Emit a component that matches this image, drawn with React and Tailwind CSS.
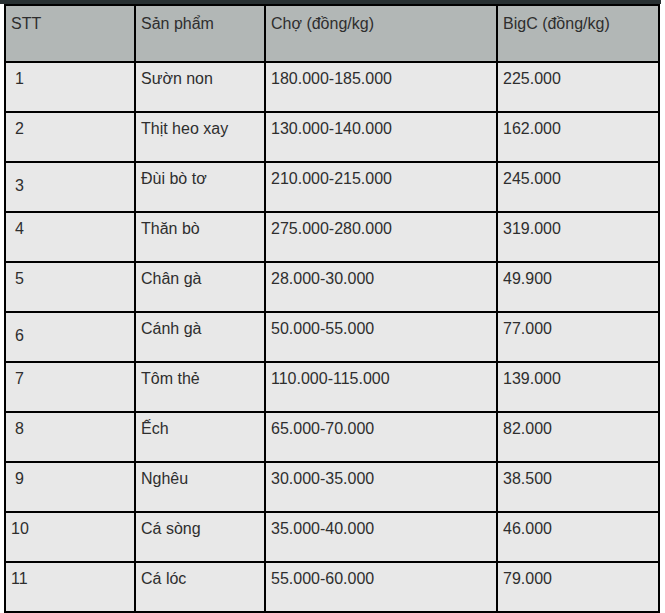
import React from 'react'

const rows = [
  ['1', 'Sườn non', '180.000-185.000', '225.000'],
  ['2', 'Thịt heo xay', '130.000-140.000', '162.000'],
  ['3', 'Đùi bò tơ', '210.000-215.000', '245.000', true],
  ['4', 'Thăn bò', '275.000-280.000', '319.000'],
  ['5', 'Chân gà', '28.000-30.000', '49.900'],
  ['6', 'Cánh gà', '50.000-55.000', '77.000', true],
  ['7', 'Tôm thẻ', '110.000-115.000', '139.000'],
  ['8', 'Ếch', '65.000-70.000', '82.000'],
  ['9', 'Nghêu', '30.000-35.000', '38.500'],
  ['10', 'Cá sòng', '35.000-40.000', '46.000'],
  ['11', 'Cá lóc', '55.000-60.000', '79.000'],
]

const App = () => {
  return (
    <div className="w-[665px] h-[613px] bg-white overflow-hidden font-['Liberation_Sans',Arial,sans-serif] text-[16px] text-[#2e2e2e]">
      {/* thanh tối phía trên */}
      <div className="w-[661px] h-[4px] bg-[#283032]"></div>
      <div className="pl-[4px]">
        <table className="border-separate border-spacing-0 border border-black w-[656px] table-fixed">
          <colgroup>
            <col className="w-[130px]" />
            <col className="w-[130px]" />
            <col className="w-[232px]" />
            <col />
          </colgroup>
          <thead>
            <tr className="bg-[#b2b7b6]">
              {['STT', 'Sản phẩm', 'Chợ (đồng/kg)', 'BigC (đồng/kg)'].map((h) => (
                <th key={h} className="h-[57px] border border-black align-top text-left font-normal px-[5px] pt-[9px] leading-[18px]">
                  {h}
                </th>
              ))}
            </tr>
          </thead>
          <tbody>
            {rows.map((r) => (
              <tr key={r[0]} className="bg-[#e8e8e8]">
                <td className={`h-[50px] border border-black align-top leading-[18px] px-[5px] ${r[4] ? 'pt-[14px]' : 'pt-[7px]'}`}>
                  <span className={r[0].length === 1 ? 'pl-[4px]' : ''}>{r[0]}</span>
                </td>
                <td className="h-[50px] border border-black align-top leading-[18px] px-[5px] pt-[7px]">{r[1]}</td>
                <td className="h-[50px] border border-black align-top leading-[18px] px-[5px] pt-[7px]">{r[2]}</td>
                <td className="h-[50px] border border-black align-top leading-[18px] px-[5px] pt-[7px]">{r[3]}</td>
              </tr>
            ))}
          </tbody>
        </table>
      </div>
    </div>
  )
}

export default App
